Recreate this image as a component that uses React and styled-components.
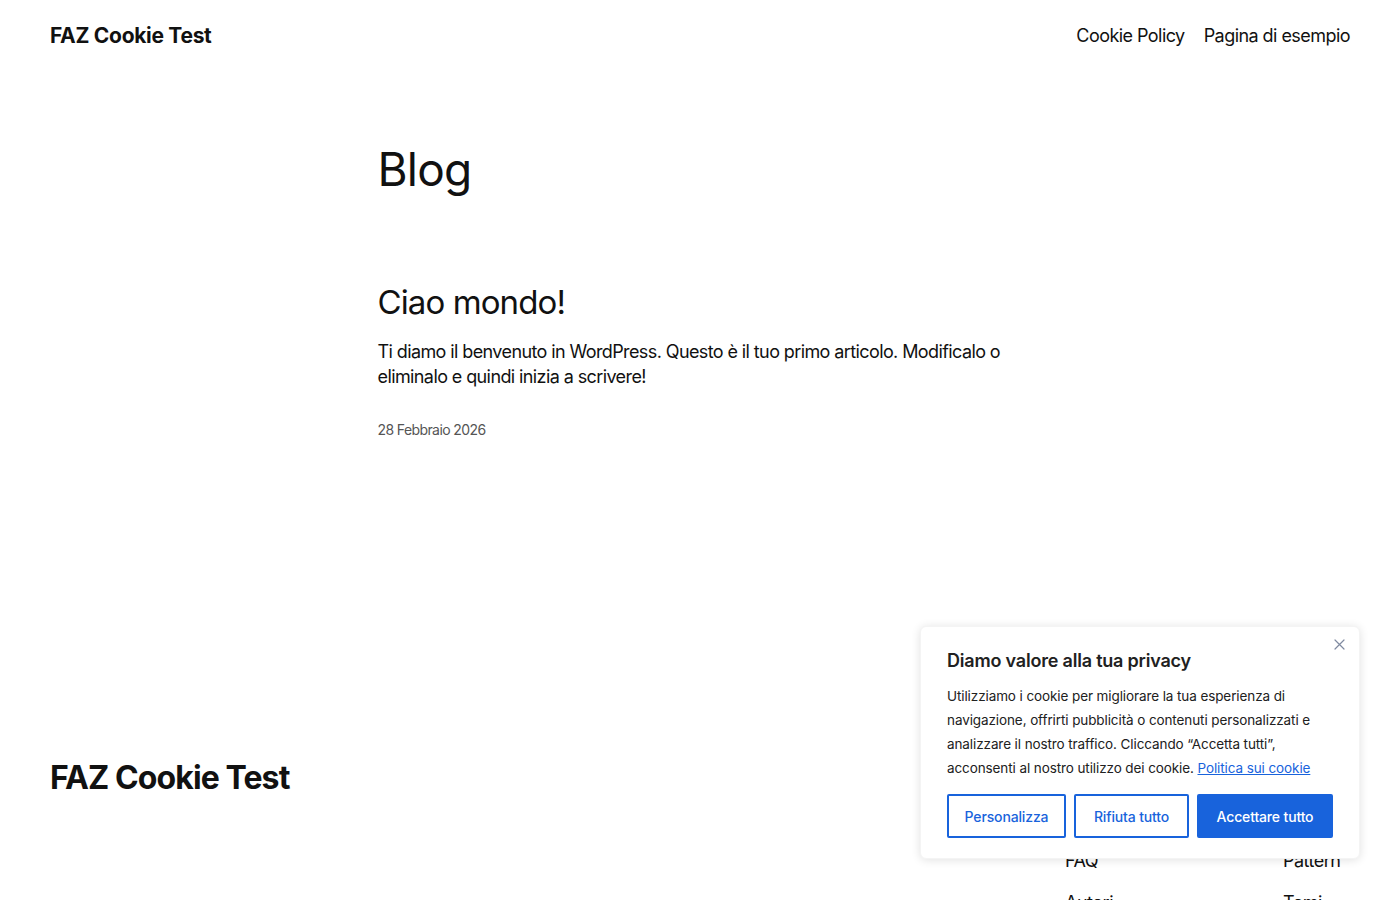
import React from "react";
import styled, { createGlobalStyle } from "styled-components";

const Global = createGlobalStyle`
  html, body { margin: 0; padding: 0; background: #fff; }
  body {
    font-family: "Inter", "Noto Sans", sans-serif;
    color: #111111;
    -webkit-font-smoothing: antialiased;
  }
  * { box-sizing: border-box; }
`;

const Page = styled.div`
  position: relative;
  overflow: hidden;
  height: 900px;
`;

const Header = styled.header`
  height: 70px;
  padding: 0 50px;
  display: flex;
  align-items: center;
  justify-content: space-between;
`;

const SiteTitle = styled.a`
  font-size: 21px;
  font-weight: 700;
  letter-spacing: -0.3px;
  color: #111;
  text-decoration: none;
`;

const Nav = styled.nav`
  display: flex;
  gap: 19px;
`;

const NavLink = styled.a`
  font-size: 18px;
  font-weight: 400;
  color: #111;
  text-decoration: none;
  letter-spacing: -0.55px;
`;

const Main = styled.main`
  width: 645px;
  margin: 0 auto;
  padding-top: 72px;
`;

const PageTitle = styled.h1`
  margin: 0;
  font-size: 46px;
  font-weight: 400;
  line-height: 1.2;
  letter-spacing: -0.8px;
`;

const Post = styled.article`
  margin-top: 86px;
`;

const PostTitle = styled.h2`
  margin: 0;
  font-size: 33px;
  font-weight: 400;
  line-height: 1.2;
  letter-spacing: -0.9px;
`;

const Excerpt = styled.p`
  margin: 16px 0 0;
  font-size: 18px;
  line-height: 25px;
  letter-spacing: -0.6px;
`;

const PostDate = styled.time`
  display: block;
  margin-top: 32px;
  font-size: 14px;
  color: #555;
  letter-spacing: -0.6px;
`;

const Footer = styled.footer`
  margin-top: 321px;
  padding: 0 50px;
  display: flex;
  justify-content: space-between;
  align-items: flex-start;
`;

const FooterTitle = styled.div`
  font-size: 32px;
  font-weight: 700;
  letter-spacing: -0.9px;
  line-height: 1.2;
`;

const FooterNavs = styled.div`
  display: flex;
  padding-top: 5px;
`;

const FooterCol = styled.ul`
  list-style: none;
  margin: 0;
  padding: 0;
  width: ${(p) => p.$w}px;
  display: flex;
  flex-direction: column;
  gap: 17px;
`;

const FooterItem = styled.li`
  font-size: 18px;
  line-height: 25px;
  letter-spacing: -0.5px;
`;

const Banner = styled.div`
  position: absolute;
  right: 40px;
  bottom: 41px;
  width: 440px;
  background: #fff;
  border: 1px solid #f4f4f4;
  border-radius: 6px;
  box-shadow: 0 1px 10px rgba(0, 0, 0, 0.12);
  padding: 22px 26px 20px;
  font-family: "Inter", "Noto Sans", sans-serif;
  color: #212121;
`;

const CloseBtn = styled.button`
  position: absolute;
  top: 9px;
  right: 12px;
  width: 16px;
  height: 16px;
  padding: 0;
  border: 0;
  background: none;
  display: flex;
  align-items: center;
  justify-content: center;
  cursor: pointer;
`;

const BannerTitle = styled.h3`
  margin: 0;
  font-size: 18px;
  font-weight: 600;
  line-height: 24px;
  letter-spacing: -0.2px;
`;

const BannerText = styled.p`
  margin: 11px 0 0;
  font-size: 13.5px;
  line-height: 24px;
  letter-spacing: -0.1px;
`;

const PolicyLink = styled.a`
  color: #1863dc;
  text-decoration: underline;
`;

const Buttons = styled.div`
  display: flex;
  gap: 8px;
  margin-top: 14px;
`;

const Btn = styled.button`
  height: 44px;
  width: ${(p) => p.$w}px;
  border-radius: 2px;
  border: 2px solid #1863dc;
  background: ${(p) => (p.$primary ? "#1863dc" : "#fff")};
  color: ${(p) => (p.$primary ? "#fff" : "#1863dc")};
  font-family: "Inter", "Noto Sans", sans-serif;
  font-size: 14px;
  font-weight: 500;
  letter-spacing: -0.15px;
  cursor: pointer;
  padding: 0;
`;

export default function App() {
  return (
    <>
      <Global />
      <Page>
        <Header>
          <SiteTitle href="#">FAZ Cookie Test</SiteTitle>
          <Nav>
            <NavLink href="#">Cookie Policy</NavLink>
            <NavLink href="#">Pagina di esempio</NavLink>
          </Nav>
        </Header>
        <Main>
          <PageTitle>Blog</PageTitle>
          <Post>
            <PostTitle>Ciao mondo!</PostTitle>
            <Excerpt>
              Ti diamo il benvenuto in WordPress. Questo è il tuo primo articolo. Modificalo o
              eliminalo e quindi inizia a scrivere!
            </Excerpt>
            <PostDate>28 Febbraio 2026</PostDate>
          </Post>
        </Main>
        <Footer>
          <FooterTitle>FAZ Cookie Test</FooterTitle>
          <FooterNavs>
            <FooterCol $w={218}>
              <FooterItem>Blog</FooterItem>
              <FooterItem>Chi siamo</FooterItem>
              <FooterItem>FAQ</FooterItem>
              <FooterItem>Autori</FooterItem>
            </FooterCol>
            <FooterCol $w={67}>
              <FooterItem>Eventi</FooterItem>
              <FooterItem>Negozio</FooterItem>
              <FooterItem>Pattern</FooterItem>
              <FooterItem>Temi</FooterItem>
            </FooterCol>
          </FooterNavs>
        </Footer>
        <Banner>
          <CloseBtn aria-label="Chiudi">
            <svg width="11" height="11" viewBox="0 0 11 11">
              <path d="M1 1L10 10M10 1L1 10" stroke="#7f8aa0" strokeWidth="1.2" strokeLinecap="round" />
            </svg>
          </CloseBtn>
          <BannerTitle>Diamo valore alla tua privacy</BannerTitle>
          <BannerText>
            Utilizziamo i cookie per migliorare la tua esperienza di navigazione, offrirti pubblicità o
            contenuti personalizzati e analizzare il nostro traffico. Cliccando “Accetta tutti”,
            acconsenti al nostro utilizzo dei cookie. <PolicyLink href="#">Politica sui cookie</PolicyLink>
          </BannerText>
          <Buttons>
            <Btn $w={119}>Personalizza</Btn>
            <Btn $w={115}>Rifiuta tutto</Btn>
            <Btn $w={136} $primary>Accettare tutto</Btn>
          </Buttons>
        </Banner>
      </Page>
    </>
  );
}
